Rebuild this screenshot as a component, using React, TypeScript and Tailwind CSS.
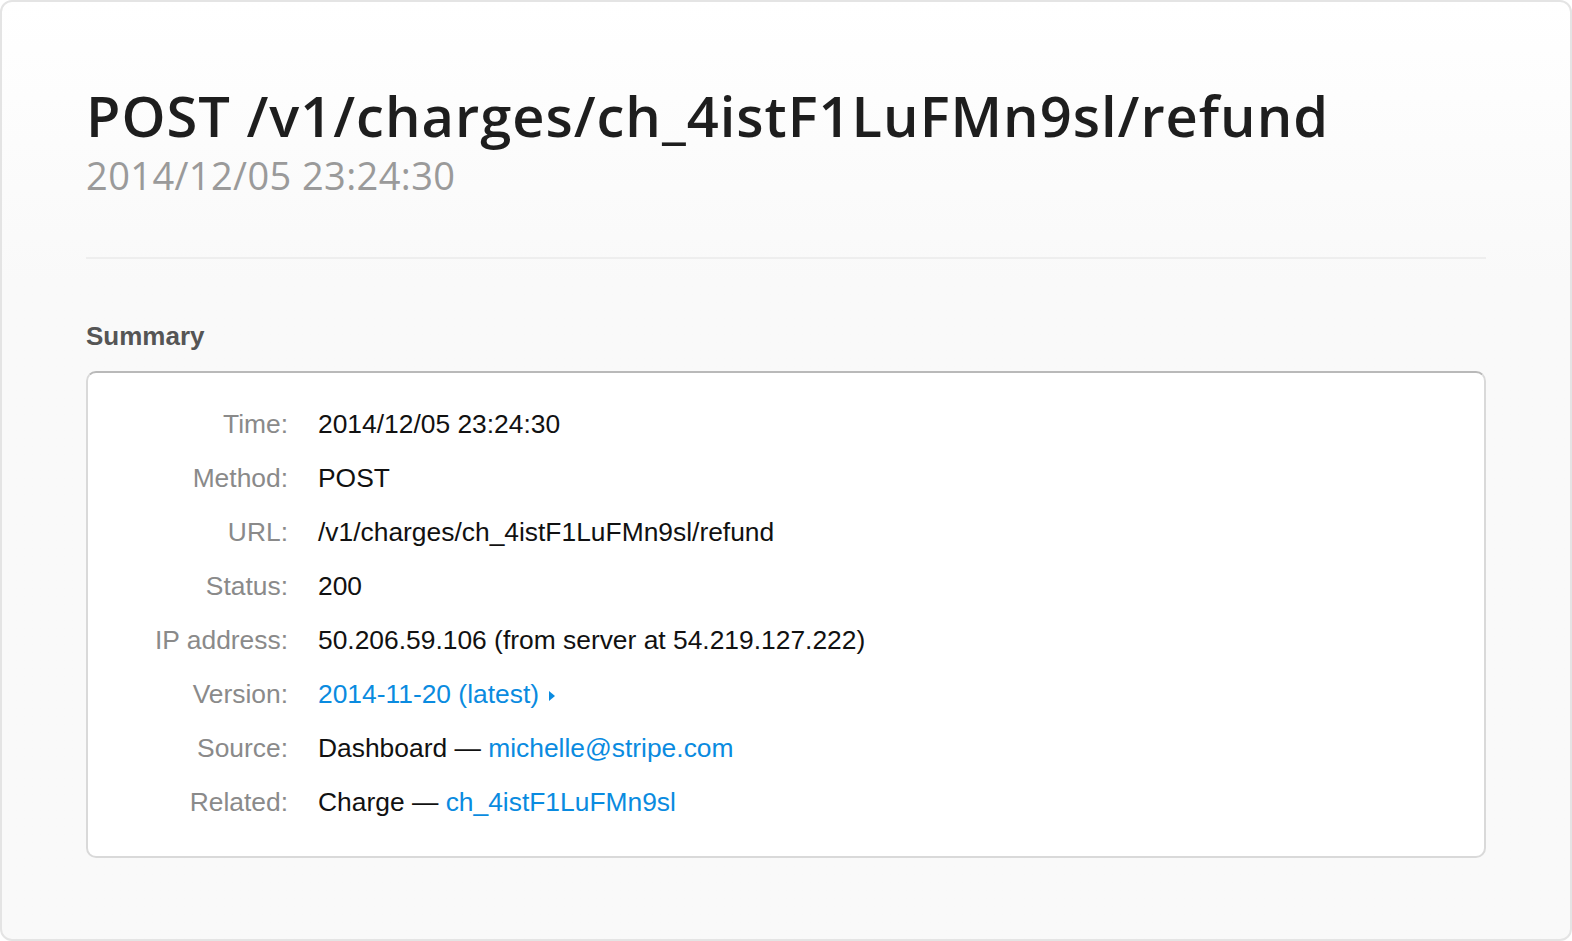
import React from "react";

const rows: { label: string; value: React.ReactNode }[] = [
  { label: "Time:", value: "2014/12/05 23:24:30" },
  { label: "Method:", value: "POST" },
  { label: "URL:", value: "/v1/charges/ch_4istF1LuFMn9sl/refund" },
  { label: "Status:", value: "200" },
  { label: "IP address:", value: "50.206.59.106 (from server at 54.219.127.222)" },
  {
    label: "Version:",
    value: (
      <span className="inline-flex items-center text-[#0a8be0]">
        2014-11-20 (latest)
        <svg width="6" height="12" viewBox="0 0 6 12" className="ml-[10px] mt-[2px]">
          <path d="M0 1 L6 6 L0 11 Z" fill="#0a8be0" />
        </svg>
      </span>
    ),
  },
  {
    label: "Source:",
    value: (
      <>
        Dashboard — <span className="text-[#0a8be0]">michelle@stripe.com</span>
      </>
    ),
  },
  {
    label: "Related:",
    value: (
      <>
        Charge — <span className="text-[#0a8be0]">ch_4istF1LuFMn9sl</span>
      </>
    ),
  },
];

export default function App() {
  return (
    <div className="w-[1572px] h-[941px] bg-white">
      <div className="h-full rounded-[12px] border-2 border-[#e4e4e4] bg-gradient-to-b from-white to-[#f9f9f9] from-0% to-30% px-[84px] pt-[81px]">
        <h1
          className="text-[56px] leading-[64px] font-semibold text-[#1e1e1e] tracking-[1px]"
          style={{ fontFamily: '"Open Sans", sans-serif' }}
        >
          POST /v1/charges/ch_4istF1LuFMn9sl/refund
        </h1>
        <div
          className="mt-[7px] text-[38px] leading-[42px] text-[#9a9a9a] tracking-[0.4px]"
          style={{ fontFamily: '"Open Sans", sans-serif' }}
        >
          2014/12/05 23:24:30
        </div>
        <div className="mt-[61px] h-[2px] bg-[#eeeeee]" />

        <h2
          className="mt-[62px] text-[26px] font-bold text-[#555555] leading-[30px]"
          style={{ fontFamily: '"Liberation Sans", Arial, sans-serif' }}
        >
          Summary
        </h2>
        <div
          className="mt-[20px] rounded-[10px] border-2 border-[#d9d9d9] border-t-[#b9b9b9] bg-white pt-[25px] pb-[26px]"
          style={{ fontFamily: '"Liberation Sans", Arial, sans-serif' }}
        >
          {rows.map((r) => (
            <div key={r.label} className="flex h-[54px] items-center text-[26.4px]">
              <div className="w-[200px] text-right text-[#8a8a8a]">{r.label}</div>
              <div className="ml-[30px] text-[#111111]">{r.value}</div>
            </div>
          ))}
        </div>
      </div>
    </div>
  );
}
